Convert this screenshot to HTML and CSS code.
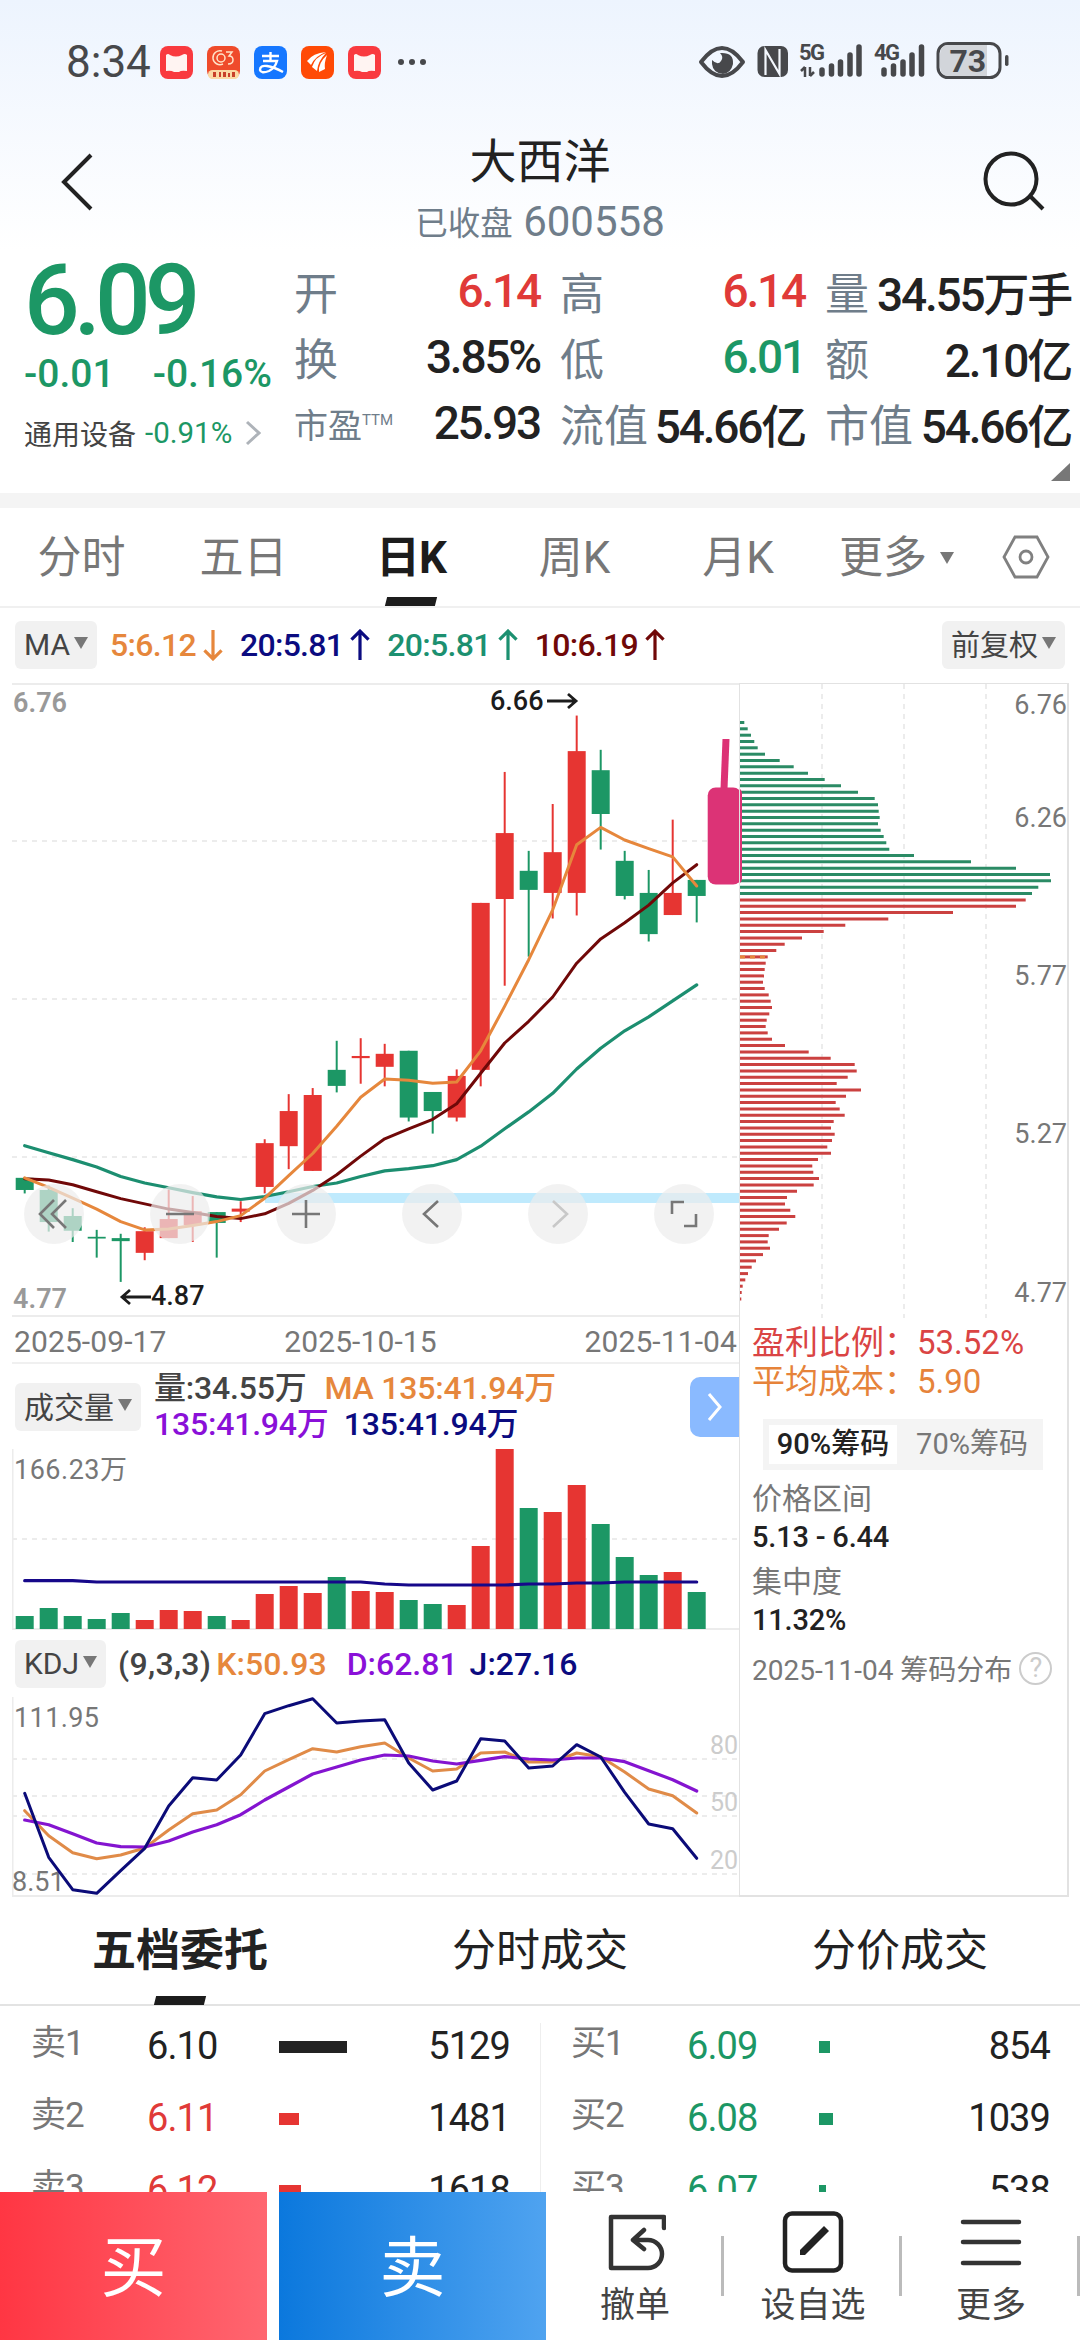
FILE: index.html
```html
<!DOCTYPE html>
<html lang="zh-CN">
<head>
    <meta charset="UTF-8">
    <meta name="viewport" content="width=device-width, initial-scale=1.0">
    <title>大西洋 600558</title>
    <link rel="stylesheet" href="styles.css">
</head>
<body>
    <div class="status-bar">
        <span class="time">8:34</span>
        <div class="apps">
            <svg width="33" height="33" viewBox="0 0 33 33"><rect width="33" height="33" rx="8" fill="#f93a3f"/><path d="M6 9q2-2 4 0q6 3 12 0q3-2 5 0v16q-6-1-8 1h-5q-3-2-8-1z" fill="#fff4f2"/></svg>
            <svg width="33" height="33" viewBox="0 0 33 33"><rect width="33" height="33" rx="8" fill="#ef4b2b"/><g fill="none" stroke="#ffe3c8" stroke-width="1.5"><path d="M15 5a7 7 0 1 0 1 13"/><circle cx="14" cy="12" r="4"/><path d="M19 6h6l-3 4q4 0 4 4t-5 4"/></g><rect x="1" y="24" width="31" height="9" rx="4.5" fill="#fbd9a5"/><path d="M6 26h3v5H6zM12 26h2v5h-2zM16 26h3v5h-3zM21 27h2v4h-2zM25 26h3v5h-3z" fill="#c8402a"/></svg>
            <svg width="33" height="33" viewBox="0 0 33 33"><rect width="33" height="33" rx="8" fill="#1677ff"/><g fill="none" stroke="#fff" stroke-width="2.4"><path d="M8 10h17M16.500 6v9M9 15h14q-2 7-8 10q-8 3-9-1q0-5 7-4q7 1 16 6"/></g></svg>
            <svg width="33" height="33" viewBox="0 0 33 33"><rect width="33" height="33" rx="8" fill="#ff4a06"/><path d="M6 15q6-8 19-9q-11 4-15 13zM11 21q3-10 14-14q-8 8-9 18zM18 26q-1-9 8-17q-3 8-2 14z" fill="#fff"/></svg>
            <svg width="33" height="33" viewBox="0 0 33 33"><rect width="33" height="33" rx="8" fill="#f93a3f"/><path d="M6 9q2-2 4 0q6 3 12 0q3-2 5 0v16q-6-1-8 1h-5q-3-2-8-1z" fill="#fff4f2"/></svg>
        </div>
        <svg class="dots" width="28" height="6" viewBox="0 0 28 6" fill="#47484b"><circle cx="3" cy="3" r="3"/><circle cx="14" cy="3" r="3"/><circle cx="25" cy="3" r="3"/></svg>
        <svg class="system" width="312" height="44" viewBox="698 40 312 44">
            <path d="M701 62Q722 34 743 62Q722 90 701 62z" fill="none" stroke="#47484b" stroke-width="4" stroke-linejoin="round"/>
            <path d="M720 53q14-1 13 11q-2 9-10 10q-10-1-11-10v-4q6 6 9 1q3-4-1-8z" fill="#47484b"/>
            <rect x="757.500" y="46" width="30.500" height="31" rx="7" fill="#47484b"/>
            <path d="M765.500 75V50l14 24V49" fill="none" stroke="#f4f8fe" stroke-width="2.2"/>
            <path d="M769 60v16h7zM769 47h7v14z" fill="#47484b"/>
            <text x="799" y="60" class="net">5G</text>
            <path d="M805 67v10M801 71l4-4M810 67v9M814 72l-4 4" stroke="#47484b" stroke-width="2.5" fill="none"/>
            <path d="M822 70v4M831.500 66v8M840.500 62v12M850 55v19M859 47v27" class="bars"/>
            <text x="874" y="60" class="net">4G</text>
            <path d="M884 70v4M893.500 66v8M903 62v12M912 55v19M921.500 47v27" class="bars"/>
            <rect x="938" y="43.500" width="62" height="34" rx="10" fill="none" stroke="#47484b" stroke-width="3"/>
            <path d="M949 45h38v31h-38q-9 0-9-9v-13q0-9 9-9z" fill="#d2d5da"/>
            <rect x="1005" y="55" width="3.500" height="11" rx="1.700" fill="#47484b"/>
            <text x="949.500" y="72" class="battery">73</text>
        </svg>
    </div>

    <div class="header">
        <svg class="back" width="34" height="60" viewBox="0 0 34 60"><path d="M31 3L4 30l27 27" fill="none" stroke="#222" stroke-width="4"/></svg>
        <div class="name">
            <h1>大西洋</h1>
            <p><span>已收盘</span> 600558</p>
        </div>
        <svg class="search" width="64" height="62" viewBox="0 0 64 62" fill="none" stroke="#222" stroke-width="4"><circle cx="30" cy="29" r="25.500"/><path d="M49 46l13 13"/></svg>
    </div>

    <div class="quote">
        <div class="price">
            <div class="last">6.09</div>
            <div class="change"><span>-0.01</span><span>-0.16%</span></div>
            <div class="sector">通用设备 <b>-0.91%</b>
                <svg width="16" height="26" viewBox="0 0 16 26"><path d="M2 2l12 11L2 24" fill="none" stroke="#aeb3b9" stroke-width="3"/></svg>
            </div>
        </div>
        <div class="stats">
            <div><label>开</label><span class="red">6.14</span></div>
            <div><label>高</label><span class="red">6.14</span></div>
            <div><label>量</label><span>34.55万手</span></div>
            <div><label>换</label><span>3.85%</span></div>
            <div><label>低</label><span class="green">6.01</span></div>
            <div><label>额</label><span>2.10亿</span></div>
            <div><label class="small">市盈<sup>TTM</sup></label><span>25.93</span></div>
            <div><label>流值</label><span>54.66亿</span></div>
            <div><label>市值</label><span>54.66亿</span></div>
        </div>
        <i class="corner"></i>
    </div>

    <div class="periods">
        <span>分时</span><span>五日</span><span class="active">日K</span><span>周K</span><span>月K</span>
        <span class="more">更多<i class="arrow"></i></span>
        <svg width="48" height="44" viewBox="0 0 48 44" fill="none" stroke="#808080" stroke-width="2.800"><path d="M13 2h22l11 20l-11 20H13L2 22z"/><circle cx="24" cy="22" r="6"/></svg>
    </div>

    <div class="ma-row">
        <div class="chip">MA<i class="arrow"></i></div>
        <span class="ma orange">5:6.12<svg width="20" height="30" viewBox="0 0 20 30"><path d="M10 1v27M2 20l8 8l8-8"/></svg></span>
        <span class="ma navy">20:5.81<svg width="20" height="30" viewBox="0 0 20 30"><path d="M10 29V2M2 10l8-8l8 8"/></svg></span>
        <span class="ma teal">20:5.81<svg width="20" height="30" viewBox="0 0 20 30"><path d="M10 29V2M2 10l8-8l8 8"/></svg></span>
        <span class="ma maroon">10:6.19<svg width="20" height="30" viewBox="0 0 20 30"><path d="M10 29V2M2 10l8-8l8 8"/></svg></span>
        <div class="chip right"><span>前复权</span><i class="arrow"></i></div>
    </div>

    <div class="charts">
        <div class="left">
            <div class="k-wrap">
                <svg id="kline" width="727" height="634" viewBox="0 0 727 634"></svg>
                <div class="controls">
                    <svg viewBox="0 0 60 60"><path d="M30 16L16 30l14 14M42 16L28 30l14 14"/></svg>
                    <svg viewBox="0 0 60 60"><path d="M16 30h28"/></svg>
                    <svg viewBox="0 0 60 60"><path d="M16 30h28M30 16v28"/></svg>
                    <svg viewBox="0 0 60 60"><path d="M36 17L22 30l14 13"/></svg>
                    <svg class="off" viewBox="0 0 60 60"><path d="M25 17l14 13l-14 13"/></svg>
                    <svg viewBox="0 0 60 60"><path d="M18 30V18h12M42 30v12H30"/></svg>
                </div>
            </div>
            <div class="dates"><span>2025-09-17</span><span>2025-10-15</span><span>2025-11-04</span></div>
            <div class="vol-head">
                <div class="chip"><span>成交量</span><i class="arrow"></i></div>
                <div class="vol-values">
                    <div><span>量:34.55万</span><span class="orange">MA 135:41.94万</span></div>
                    <div><span class="purple">135:41.94万</span><span class="navy">135:41.94万</span></div>
                </div>
                <div class="expand"><svg width="16" height="30" viewBox="0 0 16 30"><path d="M2 2l11 13L2 28" fill="none" stroke="#fff" stroke-width="3"/></svg></div>
            </div>
            <svg id="volume" width="727" height="181" viewBox="0 0 727 181"></svg>
            <div class="kdj-head">
                <div class="chip">KDJ<i class="arrow"></i></div>
                <span class="param">(9,3,3)</span><span class="orange k">K:50.93</span><span class="purple d">D:62.81</span><span class="navy">J:27.16</span>
            </div>
            <svg id="kdj" width="727" height="200" viewBox="0 0 727 200"></svg>
        </div>

        <div class="right-panel">
            <svg id="cost" width="328" height="634" viewBox="0 0 328 634"></svg>
            <div class="cost-info">
                <p class="ratio">盈利比例：53.52%</p>
                <p class="avg">平均成本：5.90</p>
                <div class="segment"><span class="active">90%筹码</span><span>70%筹码</span></div>
                <p>价格区间</p>
                <p class="val">5.13 - 6.44</p>
                <p class="gap">集中度</p>
                <p class="val">11.32%</p>
                <div class="note">2025-11-04 筹码分布<i>?</i></div>
            </div>
        </div>
    </div>

    <div class="book-tabs"><span class="active">五档委托</span><span>分时成交</span><span>分价成交</span></div>
    <div class="book">
        <div class="side">
            <div class="row"><label>卖1</label><span>6.10</span><i style="width:68px"></i><em>5129</em></div>
            <div class="row up"><label>卖2</label><span>6.11</span><i style="width:20px"></i><em>1481</em></div>
            <div class="row up"><label>卖3</label><span>6.12</span><i style="width:22px"></i><em>1618</em></div>
        </div>
        <div class="side">
            <div class="row down"><label>买1</label><span>6.09</span><i style="width:11px"></i><em>854</em></div>
            <div class="row down"><label>买2</label><span>6.08</span><i style="width:14px"></i><em>1039</em></div>
            <div class="row down"><label>买3</label><span>6.07</span><i style="width:7px"></i><em>538</em></div>
        </div>
    </div>

    <div class="bottom-bar">
        <div class="buy">买</div>
        <div class="sell">卖</div>
        <div class="action">
            <svg width="62" height="62" viewBox="0 0 62 62" fill="none" stroke="#333" stroke-width="4.500" stroke-linecap="round" stroke-linejoin="round"><path d="M60 17V6H7v51h37a14 14 0 0 0 0-28H29M40 19l-11 10l11 9"/></svg>
            <span>撤单</span>
        </div>
        <div class="action wide">
            <svg width="62" height="62" viewBox="0 0 62 62" fill="none" stroke="#222"><rect x="3" y="2.500" width="56" height="57" rx="7" stroke-width="4.500"/><path d="M18 44v-5l24-24l5 5l-24 24z" fill="#222" stroke="none"/></svg>
            <span>设自选</span>
        </div>
        <div class="action">
            <svg width="62" height="62" viewBox="0 0 62 62" fill="none" stroke="#333" stroke-width="4.500" stroke-linecap="round"><path d="M3 11h56M3 31h56M3 52h56"/></svg>
            <span>更多</span>
        </div>
    </div>

    <script src="charts.js"></script>
</body>
</html>
```

FILE: styles.css
```css
* {
    box-sizing: border-box;
}
body {
    margin: 0;
    width: 1080px;
    height: 2340px;
    overflow: hidden;
    display: flex;
    flex-direction: column;
    font-family: Roboto, "Noto Sans CJK SC", sans-serif;
    color: #222;
    background: linear-gradient(#edf4fe, #fff 250px) #fff;
}
h1, p {
    margin: 0;
    font-weight: 400;
}
i, em {
    font-style: normal;
}
svg {
    display: block;
    flex: none;
}
svg text {
    font-family: Roboto, "Noto Sans CJK SC", sans-serif;
}
.red { color: #e03a38; }
.green { color: #1c9765; }
.orange { color: #e6873c; }
.navy { color: #0b0b80; }
.teal { color: #1c9070; }
.maroon { color: #700808; }
.purple { color: #8a10d8; }

/* status bar */
.status-bar {
    height: 124px;
    display: flex;
    align-items: center;
    padding-left: 66px;
    color: #47484b;
    flex: none;
}
.time {
    width: 94px;
    font-size: 44px;
}
.apps {
    display: flex;
    gap: 14px;
}
.dots {
    margin-left: 17px;
}
.system {
    margin-left: 272px;
    overflow: visible;
}
.net {
    font-size: 22px;
    font-weight: 700;
    letter-spacing: -1.500px;
    fill: #47484b;
}
.bars {
    stroke: #47484b;
    stroke-width: 5.500;
    stroke-linecap: round;
}
.battery {
    font-size: 32px;
    font-weight: 700;
    fill: #47484b;
}

/* title */
.header {
    height: 130px;
    display: flex;
    justify-content: space-between;
    flex: none;
    padding: 0 35px 0 60px;
}
.back {
    margin-top: 28px;
}
.search {
    margin-top: 26px;
}
.name {
    text-align: center;
    padding-left: 5px;
}
.name h1 {
    font-size: 47px;
    line-height: 75px;
}
.name p {
    font-size: 42px;
    line-height: 46px;
    color: #6f7d8a;
}
.name p span {
    font-size: 32.500px;
    vertical-align: 1px;
}

/* quote */
.quote {
    position: relative;
    height: 239px;
    display: flex;
    flex: none;
}
.price {
    width: 294px;
    padding-left: 24px;
    color: #1c9765;
}
.last {
    font-size: 98px;
    font-weight: 500;
    line-height: 94px;
    letter-spacing: -6px;
}
.change {
    display: flex;
    justify-content: space-between;
    width: 248px;
    font-size: 39px;
    font-weight: 500;
    line-height: 52px;
}
.sector {
    display: flex;
    align-items: center;
    height: 66px;
    font-size: 28px;
    color: #444;
}
.sector b {
    margin: 0 13px 0 9px;
    font-weight: 400;
    font-size: 29.500px;
    color: #1c9765;
}
.stats {
    display: grid;
    grid-template-columns: 246px 245px 246px;
    grid-template-rows: repeat(3, 66px);
    column-gap: 20px;
    padding-top: 4px;
}
.stats div {
    display: flex;
    justify-content: space-between;
    align-items: center;
    white-space: nowrap;
}
.stats label {
    font-size: 44px;
    color: #6f7d8a;
}
.stats .small {
    font-size: 34px;
}
.stats sup {
    font-size: 15px;
    vertical-align: 13px;
    line-height: 0;
}
.stats span {
    font-size: 46px;
    font-weight: 500;
    letter-spacing: -2.200px;
}
.corner {
    position: absolute;
    right: 10px;
    bottom: 12px;
    border-left: 19px solid transparent;
    border-bottom: 18px solid #777;
}

/* period tabs */
.periods {
    height: 115px;
    flex: none;
    display: grid;
    grid-template-columns: 163px 161px 174px 153px 174px 177px 48px;
    align-items: center;
    border-top: 15px solid #f4f4f4;
    border-bottom: 2px solid #f0f0f0;
    font-size: 44px;
    color: #777;
}
.periods > span {
    position: relative;
    text-align: center;
    height: 98px;
    line-height: 100px;
}
.periods .active {
    font-weight: 700;
    color: #1c1c1c;
    letter-spacing: -1px;
}
.periods .active::after, .book-tabs .active::after {
    content: "";
    position: absolute;
    left: 50%;
    bottom: 0;
    width: 50px;
    height: 9px;
    margin-left: -25px;
    background: #1c1c1c;
    transform: skewX(-14deg);
}
.arrow {
    display: inline-block;
    border: 7px solid transparent;
    border-top: 12px solid #777;
    border-bottom: 0;
}
.periods .more {
    text-align: left;
    padding-left: 14px;
}
.more .arrow {
    margin-left: 13px;
    vertical-align: 9px;
}

/* indicator row */
.ma-row {
    height: 73px;
    flex: none;
    display: flex;
    align-items: center;
    padding: 0 15px;
    margin-bottom: 2px;
}
.chip {
    display: flex;
    align-items: center;
    gap: 4px;
    height: 48px;
    padding: 0 9px;
    border-radius: 6px;
    background: #f1f1f1;
    color: #444;
    font-size: 30px;
    white-space: nowrap;
    flex: none;
}
.chip span {
    margin-top: -3px;
}
.chip .arrow {
    margin-top: -3px;
}
.ma-row .right {
    margin-left: auto;
    font-size: 29px;
}
.ma {
    display: flex;
    align-items: center;
    margin-left: 13px;
    font-size: 32px;
    font-weight: 500;
    letter-spacing: -.7px;
}
.ma + .ma {
    margin-left: 16px;
}
.ma svg {
    width: 22px;
    height: 32px;
    margin-left: 6px;
    fill: none;
    stroke: currentColor;
    stroke-width: 3;
}

/* charts */
.charts {
    display: flex;
    flex: none;
    height: 1214px;
    padding-left: 12px;
}
.left {
    width: 727px;
}
.k-wrap {
    position: relative;
    height: 634px;
}
.controls {
    position: absolute;
    left: 12px;
    top: 501px;
    display: flex;
    gap: 66px;
}
.controls svg {
    width: 60px;
    height: 60px;
    border-radius: 50%;
    background: rgba(237, 237, 237, .7);
    fill: none;
    stroke: #777;
    stroke-width: 2.600;
}
.controls .off {
    stroke: #c8c8c8;
}
.dates {
    display: flex;
    justify-content: space-between;
    height: 47px;
    line-height: 49px;
    padding-left: 2px;
    border-bottom: 2px solid #f0f0f0;
    font-size: 30px;
    letter-spacing: .1px;
    color: #777;
}
.dates span:nth-child(2) {
    margin-right: 30px;
}
.dates span:nth-child(3) {
    margin-right: 2px;
}
.vol-head {
    height: 85px;
    display: flex;
    align-items: center;
    padding-left: 3px;
}
.vol-head .chip {
    margin-right: 13px;
}
.vol-values {
    font-size: 32px;
    font-weight: 500;
    line-height: 36px;
    letter-spacing: -.2px;
    color: #444;
    height: 74px;
}
.vol-values span {
    margin-right: 18px;
}
.vol-values .purple {
    margin-right: 15px;
}
.expand {
    display: flex;
    align-items: center;
    justify-content: center;
    width: 49px;
    height: 60px;
    margin-left: auto;
    padding-left: 0;
    border-radius: 10px 0 0 10px;
    background: #8abaff;
}
.kdj-head {
    height: 67px;
    display: flex;
    align-items: center;
    padding-left: 3px;
    font-size: 32px;
    font-weight: 500;
}
.kdj-head .chip {
    font-weight: 400;
}
.param {
    color: #444;
    margin: 0 5px 0 12px;
    letter-spacing: .3px;
}
.k {
    margin-right: 20px;
}
.d {
    margin-right: 12px;
}
.right-panel {
    width: 330px;
    border: 1px solid #e2e2e2;
    border-width: 1px 2px 2px 1px;
}
.cost-info {
    padding-left: 12px;
    font-size: 30px;
    color: #777;
}
.cost-info p {
    line-height: 39px;
}
.cost-info .ratio, .cost-info .avg {
    font-size: 33px;
}
.cost-info .ratio {
    padding-top: 5px;
    height: 44px;
    color: #da4444;
}
.cost-info .avg {
    color: #e6833a;
}
.segment {
    display: flex;
    width: 280px;
    height: 51px;
    margin: 18px 0 9px 11px;
    padding: 6px;
    background: #f4f4f4;
    font-size: 29px;
    line-height: 38px;
}
.segment span {
    width: 128px;
    text-align: center;
}
.segment span + span {
    width: 140px;
    padding-left: 10px;
    white-space: nowrap;
}
.segment .active {
    background: #fff;
    color: #222;
    font-weight: 500;
}
.cost-info .val {
    font-size: 29px;
    font-weight: 500;
    letter-spacing: -.2px;
    color: #222;
}
.cost-info .gap {
    margin-top: 5px;
}
.note {
    display: flex;
    align-items: center;
    margin-top: 8px;
    font-size: 28px;
    white-space: nowrap;
}
.note i {
    width: 33px;
    height: 33px;
    margin-left: 7px;
    border: 2px solid #ccc;
    border-radius: 50%;
    text-align: center;
    font-size: 27px;
    line-height: 29px;
    color: #ccc;
}
.grid {
    stroke: #ececec;
    stroke-width: 2;
    stroke-dasharray: 5 5;
    fill: none;
}
.frame {
    stroke: #ececec;
    stroke-width: 2;
    fill: none;
}
.axis {
    font-size: 27px;
    fill: #777;
}
.axis-bold {
    font-size: 27px;
    font-weight: 600;
    fill: #999;
}
.mark {
    font-size: 27px;
    font-weight: 500;
    fill: #1c1c1c;
}
.level {
    font-size: 25px;
    fill: #ccc;
}

/* order book */
.book-tabs {
    display: grid;
    grid-template-columns: repeat(3, 360px);
    flex: none;
    height: 109px;
    border-bottom: 2px solid #e3e3e3;
    text-align: center;
    font-size: 44px;
    line-height: 108px;
}
.book-tabs span {
    position: relative;
}
.book-tabs .active {
    font-weight: 700;
}
.book {
    display: flex;
    flex: none;
    height: 186px;
    padding-top: 5px;
    overflow: hidden;
}
.side {
    width: 540px;
}
.side + .side {
    background: linear-gradient(#eee, #eee) 0 12px / 1px 100% no-repeat;
}
.row {
    display: grid;
    grid-template-columns: 116px 132px 1fr auto;
    align-items: center;
    height: 72px;
    padding: 0 30px 0 31px;
    font-size: 38px;
    line-height: 56px;
    letter-spacing: -.9px;
}
.row label {
    font-size: 35px;
    margin-top: -7px;
    color: #777;
}
.row span, .row em {
    margin-top: -2px;
}
.row i {
    height: 12px;
    background: #222;
}
.up span { color: #e03a38; }
.up i { background: #e63532; }
.down span { color: #1c9765; }
.down i { background: #1c9765; }

/* bottom bar */
.bottom-bar {
    display: flex;
    flex: none;
    height: 148px;
    background: #fff;
}
.buy, .sell {
    width: 267px;
    color: #fff;
    font-size: 66px;
    line-height: 153px;
    text-align: center;
    background: linear-gradient(90deg, #ff3643, #ff6670);
}
.sell {
    margin-left: 12px;
    background: linear-gradient(90deg, #0b78dd, #4fa3f0);
}
.action {
    position: relative;
    display: flex;
    flex-direction: column;
    align-items: center;
    width: 178px;
    padding-top: 19px;
    font-size: 35px;
    line-height: 48px;
    color: #444;
}
.action span {
    margin-top: 9px;
}
.action::after {
    content: "";
    position: absolute;
    right: 0;
    top: 44px;
    width: 3px;
    height: 60px;
    background: #bbb;
}
```

FILE: charts.js
```javascript
const RED = '#e63532', GREEN = '#1c9765';
const x = i => 12.7 + i * 24;
const put = (id, html) => { document.getElementById(id).innerHTML = html; };
const line = (data, y, color, width) =>
    `<polyline points="${data.map((v, i) => x(i) + ',' + y(v).toFixed(1)).join(' ')}" fill="none" stroke="${color}" stroke-width="${width}" stroke-linejoin="round" stroke-linecap="round"/>`;

// rise/fall, body top, body bottom, high, low
const candles = [
    [0,1148,1176,1148,1184],[0,1176,1250,1166,1272],[0,1236,1270,1218,1296],[0,1284,1288,1268,1332],[0,1287,1294,1277,1388],
    [1,1271,1321,1262,1338],[1,1243,1287,1175,1287],[1,1225,1257,1190,1296],[0,1227,1252,1227,1332],[1,1219,1226,1202,1250],
    [1,1068,1169,1059,1184],[1,994,1075,955,1128],[1,957,1132,941,1132],[0,899,936,832,951],[1,867,872,826,931],
    [1,862,892,839,937],[0,855,1009,855,1018],[0,950,994,950,1046],[1,913,1009,898,1018],[1,514,899,514,937],
    [1,353,505,212,705],[0,440,484,394,638],[1,397,491,286,550],[1,164,491,82,543],[0,208,309,161,391],
    [0,417,498,394,506],[0,491,586,438,603],[1,491,542,322,542],[0,461,498,461,559]
];
const ma5 = [1148,1170,1195,1220,1249,1268,1266,1258,1249,1235,1195,1143,1092,1029,962,920,923,930,927,855,752,645,530,380,340,369,389,408,475];
const ma10 = [1150,1153,1164,1180,1196,1208,1220,1228,1237,1242,1231,1207,1177,1141,1098,1058,1035,1013,977,907,837,787,731,653,597,560,519,468,426];
const ma20 = [1074,1090,1106,1123,1145,1160,1171,1182,1192,1198,1191,1180,1168,1160,1145,1132,1127,1120,1106,1075,1035,996,953,897,849,809,777,740,703];

const ky = v => v / 2.306 - 3;
let k = '<path class="frame" d="M0 1H727M0 633H727"/><path class="grid" d="M0 158H727M0 316H727M0 474H727"/>';
candles.forEach(([up, top, bottom, high, low], i) => {
    const color = up ? RED : GREEN;
    k += `<path d="M${x(i)} ${ky(high)}V${ky(low)}" stroke="${color}" stroke-width="2"/>` +
         `<rect x="${x(i) - 9}" y="${ky(top)}" width="18" height="${ky(bottom) - ky(top)}" fill="${color}"/>`;
});
k += '<rect x="253" y="510" width="474" height="10" fill="#bfeafd"/>';
k += line(ma20, ky, '#1c8e70', 3.2) + line(ma10, ky, '#700808', 3) + line(ma5, ky, '#e6873c', 3);
k += `<text class="axis-bold" x="1" y="29" textLength="54">6.76</text><text class="axis-bold" x="1" y="625" textLength="54">4.77</text>
    <text class="mark" x="478" y="27">6.66</text><path d="M535 18h29M556 11l8 7l-8 7" fill="none" stroke="#1c1c1c" stroke-width="2.8"/>
    <text class="mark" x="139" y="622">4.87</text><path d="M139 614h-29M118 607l-8 7l8 7" fill="none" stroke="#1c1c1c" stroke-width="2.8"/>
    <path d="M710.500 56h7l-2 50h-7z" fill="#dc3376"/><rect x="695.700" y="104.500" width="33.500" height="97" rx="8" fill="#dc3376"/>`;
put('kline', k);

// volume
const tops = [918,894,918,927,909,930,900,903,918,930,852,828,849,801,843,846,870,882,885,708,417,594,606,525,642,741,795,786,846];
const avg = [812,812,812,816,816,816,816,816,816,816,816,816,816,816,816,822,825,825,825,825,825,822,822,819,819,816,816,816,816];
const vy = v => v / 3 - 139;
let vol = '<path class="frame" d="M0.500 0V180H727"/><path class="grid" d="M0 90H727"/><text class="axis" x="2" y="30" textLength="113">166.23万</text>';
tops.forEach((v, i) => {
    vol += `<rect x="${x(i) - 9}" y="${vy(v)}" width="18" height="${180 - vy(v)}" fill="${candles[i][0] ? RED : GREEN}"/>`;
});
vol += line(avg, vy, '#16088a', 3.2);
put('volume', vol);

// KDJ
const kLine = [542,617,668,686,675,654,600,551,540,494,423,389,356,366,350,339,384,423,417,369,366,396,396,369,380,426,477,497,549];
const dLine = [570,584,611,639,650,651,633,606,584,554,510,471,432,411,390,375,378,393,402,391,380,387,390,384,384,395,422,449,483];
const jLine = [490,682,779,790,722,655,528,443,450,375,251,227,206,279,273,269,399,480,453,326,333,414,408,344,381,487,582,596,685];
const jy = v => v / 3 - 67;
put('kdj', `<path class="frame" d="M0.500 0V199H727"/><path class="grid" d="M0 62H727M0 99H727M0 119H727M0 177H727"/>
    <text class="axis" x="2" y="30" textLength="85">111.95</text><text class="axis" x="0" y="194">8.51</text>
    <text class="level" x="698" y="57">80</text><text class="level" x="698" y="114">50</text><text class="level" x="698" y="172">20</text>` +
    line(kLine, jy, '#e08b48', 3) + line(dLine, jy, '#8414d0', 3.2) + line(jLine, jy, '#0b0b78', 3));

// chip distribution, one bar per price step; the first 28 are above the last price
const chips = [40,50,60,70,80,102,146,188,231,281,330,381,431,441,443,446,441,449,458,466,475,549,720,855,957,960,922,903,
    884,855,666,472,343,278,213,161,136,110,104,101,99,96,101,113,119,123,115,107,104,110,123,162,233,299,371,377,350,317,390,
    345,314,326,341,308,300,311,303,289,300,261,244,247,264,248,198,168,162,178,193,167,144,113,110,117,96,75,62,51,43,35,32,31];
let cost = '<path class="grid" d="M82 0V634M164 0V634M246 0V634"/>';
chips.forEach((v, i) => {
    const y = (38.5 + i * 6.334).toFixed(1);
    cost += `<path d="M0 ${y}H${((v - 27) / 3).toFixed(1)}" stroke="${i < 28 ? '#2b8b65' : '#cb4140'}" stroke-width="3"/>`;
});
cost += '<path d="M0 272.900H28" stroke="#e6873c" stroke-width="3" stroke-dasharray="5 5"/>';
[['6.76', 30], ['6.26', 143], ['5.77', 301], ['5.27', 458.5], ['4.77', 617.5]].forEach(([t, y]) => {
    cost += `<text class="axis" x="327" y="${y}" text-anchor="end">${t}</text>`;
});
cost += '<rect x="-10" y="103.500" width="12" height="97" rx="6" fill="#dc3376"/>';
put('cost', cost);
```
